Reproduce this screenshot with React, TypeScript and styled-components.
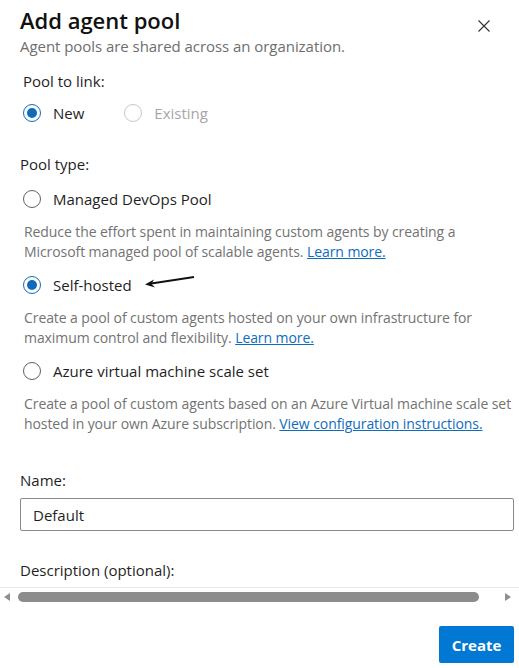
import styled, { createGlobalStyle } from 'styled-components'

const GlobalStyle = createGlobalStyle`
  html, body {
    margin: 0;
    padding: 0;
    background: #ffffff;
  }
  body {
    font-family: 'Open Sans', 'Noto Sans', 'Liberation Sans', sans-serif;
    color: #323130;
  }
`

type PoolOption = {
  id: string
  label: string
  checked: boolean
  description: string
  linkText: string
  pointed?: boolean
}

const poolTypes: PoolOption[] = [
  {
    id: 'managed',
    label: 'Managed DevOps Pool',
    checked: false,
    description:
      'Reduce the effort spent in maintaining custom agents by creating a Microsoft managed pool of scalable agents.',
    linkText: 'Learn more.',
  },
  {
    id: 'self',
    label: 'Self-hosted',
    checked: true,
    pointed: true,
    description:
      'Create a pool of custom agents hosted on your own infrastructure for maximum control and flexibility.',
    linkText: 'Learn more.',
  },
  {
    id: 'vmss',
    label: 'Azure virtual machine scale set',
    checked: false,
    description:
      'Create a pool of custom agents based on an Azure Virtual machine scale set hosted in your own Azure subscription.',
    linkText: 'View configuration instructions.',
  },
]

const App = () => {
  return (
    <>
      <GlobalStyle />
      <Panel>
        <Header>
          <div>
            <Title>Add agent pool</Title>
            <Subtitle>Agent pools are shared across an organization.</Subtitle>
          </div>
          <CloseButton type="button" aria-label="Close">
            <svg width="12" height="12" viewBox="0 0 12 12">
              <path d="M0.5 0.5 L11.5 11.5 M11.5 0.5 L0.5 11.5" stroke="#323130" strokeWidth="1.1" />
            </svg>
          </CloseButton>
        </Header>

        <LinkSection>
          <FieldLabel $indent={3}>Pool to link:</FieldLabel>
          <InlineRadios>
            <RadioRow>
              <Radio $checked />
              <RadioText>New</RadioText>
            </RadioRow>
            <RadioRow>
              <Radio $disabled />
              <RadioText $disabled>Existing</RadioText>
            </RadioRow>
          </InlineRadios>
        </LinkSection>

        <TypeSection>
          <FieldLabel>Pool type:</FieldLabel>
          {poolTypes.map((option) => (
            <TypeOption key={option.id}>
              <RadioRow>
                <Radio $checked={option.checked} />
                <RadioText>{option.label}</RadioText>
                {option.pointed ? (
                  <Pointer width="52" height="12" viewBox="0 0 52 12">
                    <path d="M50 1 L4 8" stroke="#111" strokeWidth="1.8" fill="none" />
                    <path d="M1 8.5 L10 3.5 L7.5 8 L11 11.5 Z" fill="#111" />
                  </Pointer>
                ) : null}
              </RadioRow>
              <Description>
                {option.description} <HelpLink href="#">{option.linkText}</HelpLink>
              </Description>
            </TypeOption>
          ))}
        </TypeSection>

        <NameSection>
          <FieldLabel>Name:</FieldLabel>
          <TextInput defaultValue="Default" />
        </NameSection>

        <DescSection>
          <FieldLabel>Description (optional):</FieldLabel>
        </DescSection>

        <ScrollBar>
          <ScrollArrow $side="left" />
          <ScrollTrack>
            <ScrollThumb />
          </ScrollTrack>
          <ScrollArrow $side="right" />
        </ScrollBar>

        <Footer>
          <PrimaryButton type="button">Create</PrimaryButton>
        </Footer>
      </Panel>
    </>
  )
}

export default App

const Panel = styled.div`
  width: 519px;
  height: 668px;
  box-sizing: border-box;
  padding: 4px 0 0;
  display: flex;
  flex-direction: column;
  overflow: hidden;
`

const Header = styled.header`
  display: flex;
  justify-content: space-between;
  align-items: flex-start;
  padding: 0 0 0 20px;
`

const Title = styled.h1`
  margin: 0;
  font-size: 22px;
  font-weight: 600;
  line-height: 32px;
  color: #111111;
`

const Subtitle = styled.p`
  margin: 0;
  font-size: 15px;
  line-height: 20px;
  letter-spacing: -0.05px;
  color: #6e6e6e;
`

const CloseButton = styled.button`
  width: 32px;
  height: 32px;
  margin: 6px 19px 0 0;
  padding: 0;
  border: 0;
  background: transparent;
  display: flex;
  align-items: center;
  justify-content: center;
`

const FieldLabel = styled.div<{ $indent?: number }>`
  padding-left: ${({ $indent }) => $indent ?? 0}px;
  font-size: 15px;
  line-height: 20px;
  color: #1f1f1f;
`

const LinkSection = styled.section`
  margin-top: 15px;
  padding-left: 20px;
  display: flex;
  flex-direction: column;
  gap: 12px;
`

const InlineRadios = styled.div`
  display: flex;
  gap: 40px;
  padding-left: 3px;
`

const RadioRow = styled.div`
  display: flex;
  align-items: center;
  gap: 12px;
  height: 20px;
`

const Radio = styled.span<{ $checked?: boolean; $disabled?: boolean }>`
  box-sizing: border-box;
  width: 18px;
  height: 18px;
  border-radius: 50%;
  flex: none;
  border: ${({ $checked, $disabled }) =>
    $checked ? '1.5px solid #0f6cbd' : $disabled ? '1px solid #c8c8c8' : '1.3px solid #616161'};
  display: flex;
  align-items: center;
  justify-content: center;

  &::after {
    content: '';
    display: ${({ $checked }) => ($checked ? 'block' : 'none')};
    width: 10px;
    height: 10px;
    border-radius: 50%;
    background: #0f6cbd;
  }
`

const RadioText = styled.span<{ $disabled?: boolean }>`
  font-size: 15px;
  line-height: 20px;
  color: ${({ $disabled }) => ($disabled ? '#a6a6a6' : '#1f1f1f')};
`

const TypeSection = styled.section`
  margin-top: 31px;
  padding-left: 20px;
  display: flex;
  flex-direction: column;

  & > ${FieldLabel} {
    margin-bottom: 2px;
  }
`

const TypeOption = styled.div`
  display: flex;
  flex-direction: column;
  padding: 13px 0 0 3px;
  gap: 13px;
`

const Pointer = styled.svg`
  margin-top: -6px;
`

const Description = styled.p`
  margin: 0;
  padding-left: 1px;
  font-size: 14px;
  line-height: 20px;
  letter-spacing: -0.08px;
  color: #737373;
`

const HelpLink = styled.a`
  color: #0f6cbd;
  text-decoration: underline;
`

const NameSection = styled.section`
  margin-top: 36px;
  padding: 0 5px 0 20px;
  display: flex;
  flex-direction: column;
  gap: 8px;
`

const TextInput = styled.input`
  box-sizing: border-box;
  height: 33px;
  width: 100%;
  padding: 0 12px;
  border: 1px solid #8a8a8a;
  border-radius: 2px;
  font-family: inherit;
  font-size: 15px;
  color: #1f1f1f;
  outline: none;
`

const DescSection = styled.section`
  margin-top: 29px;
  padding-left: 20px;
`

const ScrollBar = styled.div`
  margin-top: 7px;
  height: 17px;
  display: flex;
  align-items: center;
  gap: 8px;
  padding: 0 8px 0 4px;
  border-top: 1px solid #e6e6e6;
`

const ScrollArrow = styled.span<{ $side: 'left' | 'right' }>`
  width: 0;
  height: 0;
  border-top: 4.5px solid transparent;
  border-bottom: 4.5px solid transparent;
  ${({ $side }) =>
    $side === 'left' ? 'border-right: 6px solid #8f8f8f;' : 'border-left: 6px solid #8f8f8f;'}
  flex: none;
`

const ScrollTrack = styled.div`
  flex: 1;
  height: 11px;
  display: flex;
  align-items: center;
  padding-right: 18px;
`

const ScrollThumb = styled.div`
  width: 100%;
  height: 10px;
  border-radius: 5px;
  background: #8c8c8c;
`

const Footer = styled.footer`
  margin-top: 21px;
  display: flex;
  justify-content: flex-end;
  padding-right: 5px;
`

const PrimaryButton = styled.button`
  width: 75px;
  height: 37px;
  border: 0;
  border-radius: 2px;
  background: #0078d4;
  color: #ffffff;
  font-family: inherit;
  font-size: 15px;
  font-weight: 700;
`
